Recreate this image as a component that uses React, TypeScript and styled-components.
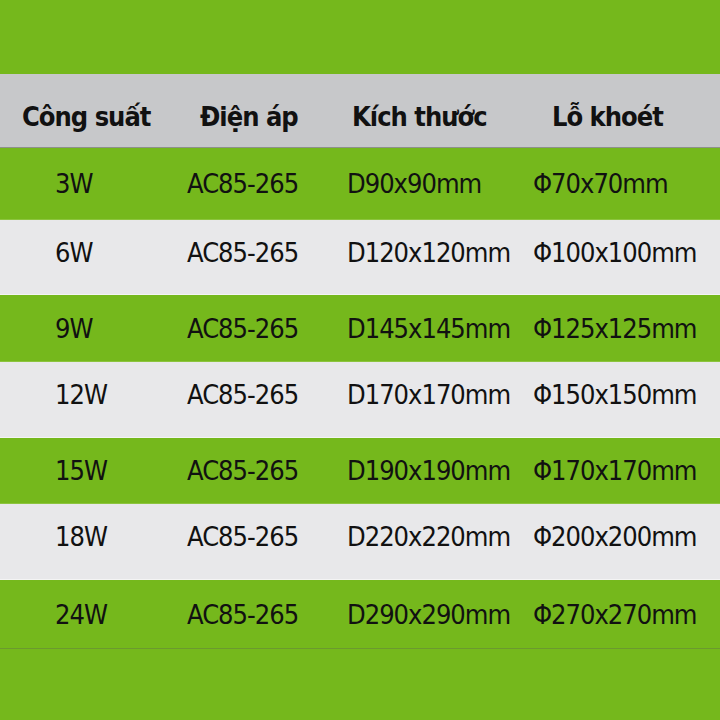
import React from 'react';
import styled, { createGlobalStyle } from 'styled-components';

const GlobalStyle = createGlobalStyle`
	html, body {
		margin: 0;
		padding: 0;
		background: #75b81c;
	}
`;

const Page = styled.div`
	width: 720px;
	height: 720px;
	overflow: hidden;
	background: #75b81c; /* green backdrop */
	padding-top: 74px;
	box-sizing: border-box;
	font-family: 'DejaVu Sans Condensed', 'DejaVu Sans', 'Liberation Sans', sans-serif;
	font-stretch: condensed;
	color: #111;
`;

const Table = styled.div`
	display: flex;
	flex-direction: column;
`;

const HeaderRow = styled.div`
	display: grid;
	grid-template-columns: 175px 160px 185px 1fr;
	align-items: center;
	height: 74px;
	padding-top: 11px;
	box-sizing: border-box;
	background: #c7c8ca;
	border-bottom: 1px solid #8e918a;
`;

const HeadCell = styled.div<{ $pad: number }>`
	padding-left: ${({ $pad }) => $pad}px;
	font-size: 27px;
	font-weight: bold;
	letter-spacing: -1px;
	white-space: nowrap;
`;

interface RowProps {
	$tone: 'green' | 'gray';
	$height: number;
	$last?: boolean;
}
const Row = styled.div<RowProps>`
	display: grid;
	grid-template-columns: 175px 160px 185px 1fr;
	align-items: center;
	height: ${({ $height }) => $height}px;
	box-sizing: border-box;
	padding-bottom: ${({ $tone }) => ($tone === 'gray' ? 10 : 0)}px;
	background: ${({ $tone }) => ($tone === 'gray' ? '#e8e8ea' : '#75b81c')};
	border-bottom: 1px solid ${({ $last, $tone }) => ($last ? '#6b9a2e' : $tone === 'gray' ? '#f4f4f4' : '#8cc43e')};
`;

const Cell = styled.div<{ $pad: number }>`
	padding-left: ${({ $pad }) => $pad}px;
	font-size: 27px;
	letter-spacing: -1px;
	white-space: nowrap;
`;

const headers = [
	{ label: 'Công suất', pad: 22 },
	{ label: 'Điện áp', pad: 25 },
	{ label: 'Kích thước', pad: 17 },
	{ label: 'Lỗ khoét', pad: 32 },
];

const cellPads = [55, 12, 12, 13];

const rows = [
	{ power: '3W', volt: 'AC85-265', size: 'D90x90mm', hole: 'Φ70x70mm', height: 72 },
	{ power: '6W', volt: 'AC85-265', size: 'D120x120mm', hole: 'Φ100x100mm', height: 75 },
	{ power: '9W', volt: 'AC85-265', size: 'D145x145mm', hole: 'Φ125x125mm', height: 67 },
	{ power: '12W', volt: 'AC85-265', size: 'D170x170mm', hole: 'Φ150x150mm', height: 76 },
	{ power: '15W', volt: 'AC85-265', size: 'D190x190mm', hole: 'Φ170x170mm', height: 66 },
	{ power: '18W', volt: 'AC85-265', size: 'D220x220mm', hole: 'Φ200x200mm', height: 76 },
	{ power: '24W', volt: 'AC85-265', size: 'D290x290mm', hole: 'Φ270x270mm', height: 69 },
];

const App: React.FC = () => {
	return (
		<>
			<GlobalStyle />
			<Page>
				<Table>
					<HeaderRow>
						{headers.map((h) => (
							<HeadCell key={h.label} $pad={h.pad}>{h.label}</HeadCell>
						))}
					</HeaderRow>
					{rows.map((r, i) => (
						<Row
							key={r.power}
							$tone={i % 2 === 0 ? 'green' : 'gray'}
							$height={r.height}
							$last={i === rows.length - 1}
						>
							{[r.power, r.volt, r.size, r.hole].map((v, j) => (
								<Cell key={j} $pad={cellPads[j]}>{v}</Cell>
							))}
						</Row>
					))}
				</Table>
			</Page>
		</>
	);
};

export default App;
